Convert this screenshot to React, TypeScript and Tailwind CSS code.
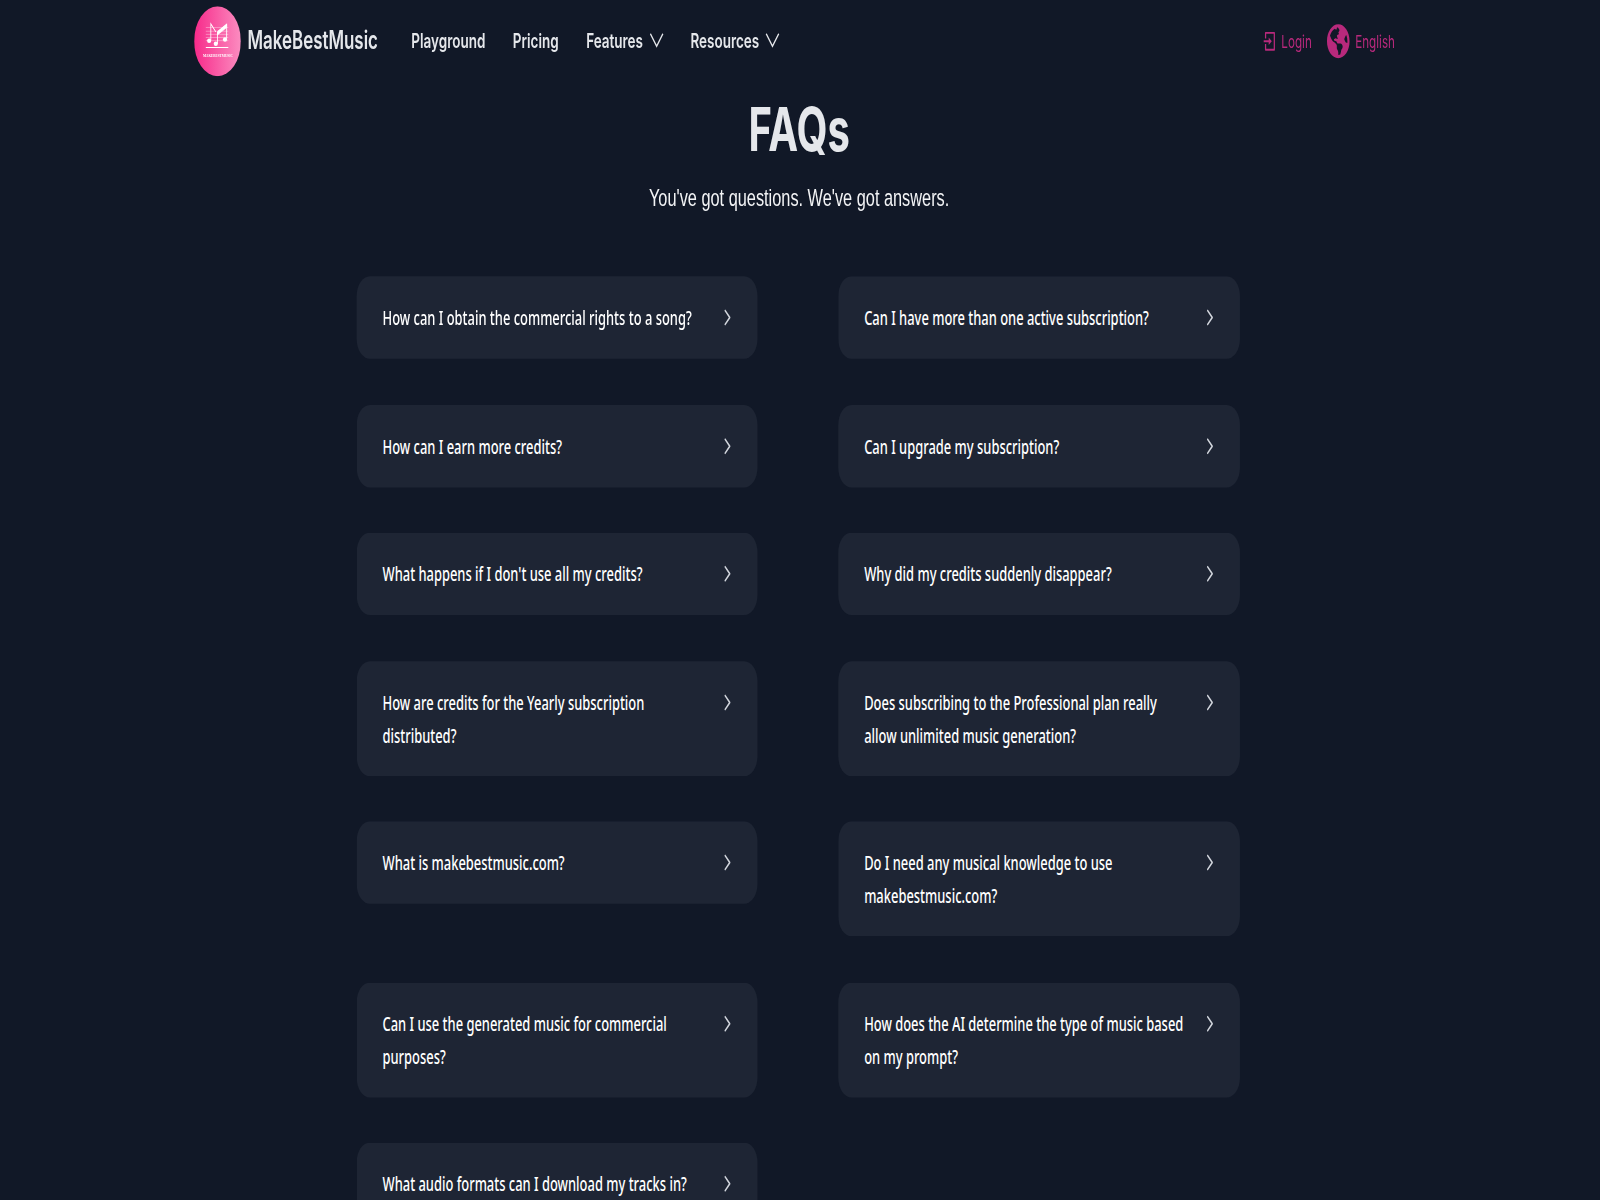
import { ChevronRight } from "lucide-react";
import { FaGlobeAmericas } from "react-icons/fa";
import { RiLoginBoxLine } from "react-icons/ri";

const faqs = [
  "How can I obtain the commercial rights to a song?",
  "Can I have more than one active subscription?",
  "How can I earn more credits?",
  "Can I upgrade my subscription?",
  "What happens if I don't use all my credits?",
  "Why did my credits suddenly disappear?",
  "How are credits for the Yearly subscription distributed?",
  "Does subscribing to the Professional plan really allow unlimited music generation?",
  "What is makebestmusic.com?",
  "Do I need any musical knowledge to use makebestmusic.com?",
  "Can I use the generated music for commercial purposes?",
  "How does the AI determine the type of music based on my prompt?",
  "What audio formats can I download my tracks in?",
];

function Logo() {
  return (
    <svg viewBox="0 0 56 56" className="h-14 w-14 shrink-0">
      <defs>
        <linearGradient id="logo-pink" x1="0" x2="1" y1="0" y2="0">
          <stop offset="0" stopColor="#f72a8a" />
          <stop offset="1" stopColor="#fb8cc0" />
        </linearGradient>
      </defs>
      <circle cx="28" cy="28" r="28" fill="url(#logo-pink)" />
      <g stroke="#fff" fill="none" strokeWidth="0.6">
        <path d="M14 17h27M14 20h27M14 22.5h27M14 25h27M14 27.5h27" opacity="0.55" />
        <path d="M14 33h27" strokeWidth="0.9" />
        <path d="M20 27V14l6 6.5M28 30V20.5M39 26V14.5l-11 6" strokeWidth="1" />
        <path d="M28 20.5l11-6v2.5l-11 6z" fill="#fff" />
      </g>
      <g fill="#fff">
        <ellipse cx="18" cy="27.5" rx="2.5" ry="1.8" />
        <ellipse cx="26" cy="30" rx="2.5" ry="1.8" />
        <ellipse cx="37" cy="26.5" rx="2.5" ry="1.8" />
      </g>
      <text
        x="28.5"
        y="41"
        textAnchor="middle"
        fill="#fff"
        fontSize="4"
        fontWeight="700"
        fontFamily="Liberation Serif, serif"
      >
        MAKEBESTMUSIC
      </text>
    </svg>
  );
}

function DownIcon() {
  return (
    <svg viewBox="0 0 24 24" className="-mr-1 h-6 w-6" fill="none" stroke="currentColor" strokeWidth="1.5">
      <path d="M4.5 7l7.5 10 7.5-10" />
    </svg>
  );
}

function FaqCard({ text }: { text: string }) {
  return (
    <div className="flex items-start justify-between gap-4 rounded-2xl bg-[#1e2534] py-5 pl-[31px] pr-[25px]">
      <p className="font-['Noto_Sans',sans-serif] text-[15.5px] leading-[26px] font-medium text-white">{text}</p>
      <ChevronRight className="mt-0.5 h-[22px] w-[22px] shrink-0 text-gray-300" strokeWidth={1.75} />
    </div>
  );
}

export default function App() {
  return (
    <div className="h-[1200px] w-[1600px] overflow-hidden bg-[#111827]">
      {/* page was taken at 1920x960 and squeezed into the frame */}
      <div className="h-[960px] w-[1920px] origin-top-left scale-x-[0.8333] scale-y-[1.25] font-['Inter',sans-serif]">
        <nav className="flex h-[65px] items-center pl-[233px] pr-[246px]">
          <a className="flex items-center gap-2">
            <Logo />
            <span className="text-[20.3px] font-semibold text-gray-200">MakeBestMusic</span>
          </a>
          <ul className="ml-10 flex items-center gap-[33px] text-[16.2px] font-semibold text-gray-200">
            <li>Playground</li>
            <li>Pricing</li>
            <li className="flex items-center gap-1">
              Features
              <DownIcon />
            </li>
            <li className="flex items-center gap-1">
              Resources
              <DownIcon />
            </li>
          </ul>
          <div className="ml-auto flex items-center text-[#b8297c]">
            <RiLoginBoxLine className="h-[18px] w-[18px]" />
            <span className="ml-[5px] text-sm">Login</span>
            <FaGlobeAmericas className="ml-[18px] h-7 w-7" />
            <span className="ml-1.5 text-sm">English</span>
          </div>
        </nav>

        <header className="pt-[15px] pr-0.5 text-center">
          <h1 className="text-5xl font-bold text-gray-200">FAQs</h1>
          <p className="mt-4 font-['Liberation_Sans',sans-serif] text-[19.6px] text-gray-100">
            You've got questions. We've got answers.
          </p>
        </header>

        <section className="ml-[428px] mt-[48px] grid grid-cols-[481px_482px] items-start gap-x-[97px] gap-y-[36.5px]">
          {faqs.map((q) => (
            <FaqCard key={q} text={q} />
          ))}
        </section>
      </div>
    </div>
  );
}
